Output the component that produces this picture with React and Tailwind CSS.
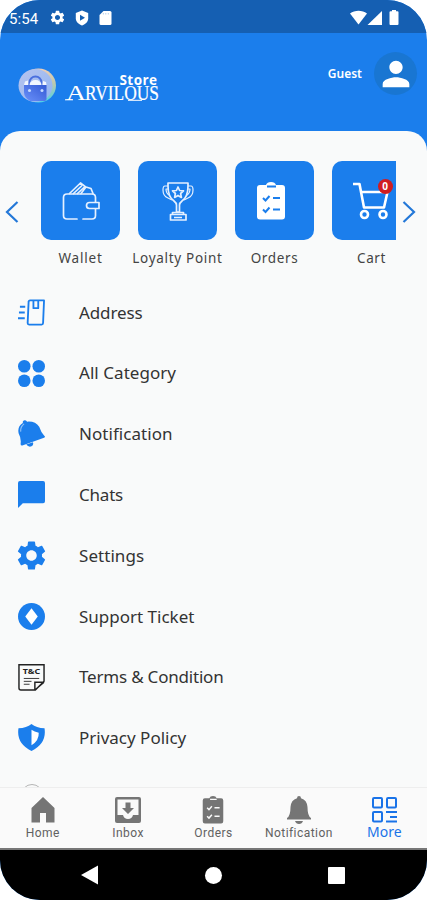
import { MdSettings, MdPerson } from 'react-icons/md';
import clsx from 'clsx';

/* ---------- status bar ---------- */

function StatusBar() {
    return (
        <div className="flex h-[33px] shrink-0 items-center bg-[#155fb2] pt-0.5 text-white">
            <span className="ml-[9px] mt-[3px] w-[30px] font-['Roboto',sans-serif] text-[15px] leading-none tracking-[0.1px]">5:54</span>
            <MdSettings className="ml-[10px] size-[17px]" />
            <svg className="ml-2 size-4" viewBox="0 0 16 16">
                <path d="M8 .5 14.2 3v5.3c0 3.4-2.7 6-6.2 7.3-3.500-1.300-6.200-3.900-6.200-7.300V3z" fill="currentColor" />
                <path d="M6 4.800v6L11 7.800z" fill="#155fb2" />
            </svg>
            <svg className="ml-2 size-4" viewBox="0 0 16 16">
                <path d="M5.500 1h6.500a1.500 1.500 0 0 1 1.500 1.500v11a1.500 1.500 0 0 1-1.500 1.500H3a1.500 1.500 0 0 1-1.500-1.500V5z" fill="currentColor" />
                <path d="M5.300 3v1.500M7.800 3v1.500M10.300 3v1.500" stroke="#b5cfea" strokeWidth="1" />
            </svg>
            <svg className="ml-auto mr-[28px] h-4 w-[49px]" viewBox="0 0 49 16" fill="currentColor">
                <path d="M0 3.600C4.800-.2 12.200-.2 17 3.600L8.500 14.500z" />
                <path d="M32 1v14H17.500z" />
                <path d="M42 0h4v1.200h1.500a1 1 0 0 1 1 1V14a1 1 0 0 1-1 1h-7a1 1 0 0 1-1-1V2.200a1 1 0 0 1 1-1H42z" />
            </svg>
        </div>
    );
}

/* ---------- header ---------- */

function BrandLogo() {
    return (
        <svg className="h-[40px] w-[146px]" viewBox="0 0 146 40">
            <defs>
                <linearGradient id="disc" x1="0" y1="0" x2="1" y2="1">
                    <stop offset="0" stopColor="#b7c4ee" />
                    <stop offset="1" stopColor="#8fb4f3" />
                </linearGradient>
                <linearGradient id="ring" x1="0" y1="0" x2="0" y2="1">
                    <stop offset="0" stopColor="#f1cdb5" />
                    <stop offset="0.450" stopColor="#b9c9ae" />
                    <stop offset="1" stopColor="#49d3e8" />
                </linearGradient>
                <linearGradient id="bag" x1="0" y1="1" x2="1" y2="0">
                    <stop offset="0" stopColor="#6b91fa" />
                    <stop offset="1" stopColor="#345bd5" />
                </linearGradient>
            </defs>
            <ellipse cx="21.500" cy="19.500" rx="17.500" ry="17" fill="url(#ring)" />
            <ellipse cx="18.500" cy="19.500" rx="17" ry="16.500" fill="url(#disc)" />
            <path d="M12.500 19v-2.500a6 6 0 0 1 12 0V19" fill="none" stroke="#4b70de" strokeWidth="1.800" />
            <path d="M12.500 19a6 5 0 0 1 12 0zM8 15.500l3-1v4.500H7zM26 15l3 1 .5 3h-4z" fill="#f1f6ff" />
            <path d="M7 19h22.500v14q0 2-2 2H13Q7 31.500 7 26z" fill="url(#bag)" />
            <circle cx="12.500" cy="24.500" r="1.500" fill="#c6dcff" />
            <circle cx="25" cy="24.500" r="1.500" fill="#c6dcff" />
            <g fill="#fff">
                <text x="102.500" y="18.500" fontFamily="Open Sans, sans-serif" fontWeight="700" fontSize="13.500" textLength="37.500">Store</text>
                <g fontFamily="Liberation Serif, serif">
                    <text x="49" y="34" fontSize="22" textLength="20" lengthAdjust="spacingAndGlyphs">A</text>
                    <text x="68" y="34" fontSize="20.500" textLength="74" lengthAdjust="spacingAndGlyphs" stroke="#fff" strokeWidth="0.200">RVILOUS</text>
                </g>
                <path d="M48 33.800h8M111 34.300h14" stroke="#fff" strokeWidth="1" />
            </g>
        </svg>
    );
}

function Header() {
    return (
        <header className="flex h-[98px] shrink-0 items-start justify-between pl-[17px] pr-[10px]">
            <div className="pt-[33px]">
                <BrandLogo />
            </div>
            <div className="flex items-center pt-[19px]">
                <span className="mr-[12px] text-[12px] font-semibold text-white">Guest</span>
                <div className="flex size-[43px] items-center justify-center rounded-full bg-[#1976d2]">
                    <MdPerson className="size-10 text-white" />
                </div>
            </div>
        </header>
    );
}

/* ---------- shortcut tiles ---------- */

function WalletIcon() {
    return (
        <svg className="size-[40px]" viewBox="0 0 40 40" fill="none" stroke="#e5f0ff" strokeWidth="1.700" strokeLinecap="round" strokeLinejoin="round">
            <path d="M16 38H6q-3.500 0-3.500-3.500V16.500Q2.500 13 6 13h25q3.500 0 3.500 3.500V21M34.500 28v6.500q0 3.500-3.500 3.500h-9" />
            <path d="M38 21.500h-9.500q-3 0-3 3t3 3H38z" />
            <path d="M8.500 12.500 19.500 2l4.500 3.500-7.500 7M12.500 12.500l8-7.500M20 12.500l5-6.500 5 1.500 2 5" />
        </svg>
    );
}

function TrophyIcon() {
    return (
        <svg className="h-[40px] w-[32px]" viewBox="0 0 32 40" fill="none" stroke="#e5f0ff" strokeWidth="1.700" strokeLinejoin="round">
            <path d="M6 2h20v3q0 11-6 15-2.500 2-2.500 4v7h-3v-7q0-2-2.500-4Q6 16 6 5z" />
            <path d="M6 5H3q-2 0-2 4 0 6 5 8 2 1 4 2M26 5h3q2 0 2 4 0 6-5 8-2 1-4 2M6.500 8H4q0 5 4 6.500M25.500 8H28q0 5-4 6.500" strokeWidth="1.200" />
            <path d="m16 6 1.600 3.500 3.900.4-2.900 2.600.8 3.900-3.400-2-3.400 2 .8-3.900-2.900-2.600 3.900-.4z" />
            <path d="M10.500 31.500h11v2H24V39H8.500v-5.500h2zM10.500 33.500h11M12 36.500h8" />
        </svg>
    );
}

function ClipboardIcon({ className, mark }) {
    return (
        <svg className={className} viewBox="0 0 30 38" fill="none">
            <path d="M4 3h6q1-3 5-3t5 3h6q3 0 3 3v28.500q0 3-3 3H4q-3 0-3-3V6q0-3 3-3z" fill="currentColor" />
            <path d="M11 4.500h9M7 16l2.500 2.500 4-4.500M7 27.500l2.500 2.500 4-4.500M17 16h7M17 27.500h7" stroke={mark} strokeWidth="2" />
        </svg>
    );
}

function CartIcon() {
    return (
        <div className="relative mr-0.5">
            <svg className="h-[40px] w-[38px]" viewBox="0 0 38 40" fill="none" stroke="#fff" strokeWidth="2.600" strokeLinejoin="round">
                <path d="M1 3h6.500L12 26.500h20L35.500 11M9 11h26.500" />
                <circle cx="12.500" cy="33.500" r="3.500" />
                <circle cx="31" cy="33.500" r="3.500" />
            </svg>
            <span className="absolute left-[26px] top-[-2px] flex size-[15px] items-center justify-center rounded-full bg-[#d01c20] text-[10px] font-bold leading-none text-white">0</span>
        </div>
    );
}

const shortcuts = [
    { label: 'Wallet', icon: <WalletIcon />, spacing: 'tracking-[0.8px]' },
    { label: 'Loyalty Point', icon: <TrophyIcon />, spacing: 'tracking-[0.7px]' },
    { label: 'Orders', icon: <ClipboardIcon className="mr-2 h-[38px] w-[30px] text-white" mark="#1b7eec" />, spacing: 'tracking-[0.65px]' },
    { label: 'Cart', icon: <CartIcon />, spacing: 'tracking-[0.6px]' },
];

function Chevron({ left }) {
    return (
        <svg className="h-[22px] w-[14px] shrink-0" viewBox="0 0 14 22" fill="none" stroke="#2478d8" strokeWidth="2.200">
            <path d={left ? 'M12.500 1 2 11l10.500 10' : 'M1.500 1 12 11 1.500 21'} />
        </svg>
    );
}

function Shortcuts() {
    return (
        <div className="flex shrink-0 items-start pl-[5px] pt-[30px]">
            <div className="pt-[40px]"><Chevron left /></div>
            <div className="ml-[13px] flex w-[364px] overflow-hidden">
                {shortcuts.map(item => (
                    <div key={item.label} className="flex w-[97px] shrink-0 flex-col items-center">
                        <div className="flex size-[79px] items-center justify-center rounded-[10px] bg-[#1b7eec]">
                            {item.icon}
                        </div>
                        <span className={clsx('mt-[7px] whitespace-nowrap text-[13.500px] leading-[22px] text-[#444]', item.spacing)}>{item.label}</span>
                    </div>
                ))}
            </div>
            <div className="ml-[6px] pt-[40px]"><Chevron /></div>
        </div>
    );
}

/* ---------- menu ---------- */

const menu = [
    {
        label: 'Address',
        spacing: 'tracking-[-0.1px]',
        icon: (
            <g fill="none" stroke="#1b7eec" strokeWidth="1.900" strokeLinejoin="round">
                <path d="M12.500 1.500H27L26 25q0 1.500-1.500 1.500h-13Q10 26.500 10 25l1-22q0-1.500 1.500-1.500zM16 2v7.500h5V2" />
                <path d="M2 8h5.500M1 14h6M0 20h7" />
            </g>
        ),
    },
    {
        label: 'All Category',
        spacing: 'tracking-[0.05px]',
        icon: (
            <g fill="#1b7eec">
                <circle cx="6.500" cy="6.500" r="6.500" />
                <circle cx="21.500" cy="6.500" r="6.500" />
                <circle cx="6.500" cy="21.500" r="6.500" />
                <circle cx="21.500" cy="21.500" r="6.500" />
            </g>
        ),
    },
    {
        label: 'Notification',
        spacing: 'tracking-[0.05px]',
        icon: (
            <g fill="#1b7eec">
                <path d="M5 1.500Q7-1 9.500 1.700 18 1 22 7q2 6 5 9 2 1.500 0 2.500L4.500 26.500q-2 .3-1.800-2Q3.500 19 .7 14-1 6.500 5 3z" />
                <path d="M8.500 25.500 15.500 23q1 3-1.500 4.300-3 1.200-5.500-1.800z" />
                <path d="M2.800 12q-.5-5 3.500-8" fill="none" stroke="#8fc0f8" strokeWidth="1.200" />
            </g>
        ),
    },
    { label: 'Chats', spacing: 'tracking-[-0.2px]', icon: <path d="M2 0h24q2 0 2 2v19q0 2-2 2H5l-5 5V2q0-2 2-2z" fill="#1b7eec" /> },
    { label: 'Settings', spacing: 'tracking-[0.05px]', component: MdSettings },
    {
        label: 'Support Ticket',
        spacing: 'tracking-[0px]',
        icon: (
            <g>
                <circle cx="14" cy="14" r="14" fill="#1b7eec" />
                <path d="m14 5.500 6.500 8.500-6.500 8.500L7.500 14z" fill="#fff" />
            </g>
        ),
    },
    {
        label: 'Terms & Condition',
        spacing: 'tracking-[-0.2px]',
        icon: (
            <g fill="none" stroke="#222" strokeWidth="1.500">
                <path d="M1 .8h26v17L18 27H3q-2 0-2-2zM17.500 27v-8H27M17.500 27l9.500-8" />
                <path d="M6 15h16M6 18h8M6 21h6" strokeWidth="0.900" />
                <text x="5" y="10.500" fontSize="7.500" fontWeight="700" stroke="none" fill="#222" textLength="18" lengthAdjust="spacingAndGlyphs">T&amp;C</text>
            </g>
        ),
    },
    {
        label: 'Privacy Policy',
        spacing: 'tracking-[0px]',
        icon: (
            <g>
                <path d="M14 0q5 4 13.500 4.500Q30 20 14 28-2 20 .5 4.500 9 4 14 0z" fill="#1b7eec" />
                <path d="M14 6q3 2.300 7.500 3Q22 17 14 22z" fill="#fff" />
            </g>
        ),
    },
];

function Menu() {
    return (
        <div className="mt-[13px] min-h-0 flex-1 overflow-hidden pl-[18px]">
            {menu.map(({ label, spacing, icon, component: Icon }) => (
                <div key={label} className="flex h-[60.8px] items-center">
                    {Icon
                        ? <Icon className="-mx-1 size-[35px] shrink-0 text-[#1b7eec]" />
                        : <svg className="size-[27px] shrink-0" viewBox="0 0 28 28">{icon}</svg>}
                    <span className={clsx('ml-[34px] text-[17px] text-[#333]', spacing)}>{label}</span>
                </div>
            ))}
            <div className="ml-[3px] mt-[16px] size-[22px] rounded-full border border-[#b5b5b5]" />
        </div>
    );
}

/* ---------- bottom bar ---------- */

const tabs = [
    {
        label: 'Home',
        icon: <path d="M14 1 25.500 12v14.500H17V17h-6v9.500H2.500V12z" fill="#757575" />,
    },
    {
        label: 'Inbox',
        icon: (
            <g>
                <rect x="1" y="1" width="26" height="26" rx="2" fill="#757575" />
                <path d="M3.500 3.500h21V19H19q-1 4-5 4t-5-4H3.500z" fill="#fafafa" />
                <path d="M11.500 6.500h5V12H20l-6 6-6-6h3.500z" fill="#757575" />
            </g>
        ),
    },
    { label: 'Orders' },
    {
        label: 'Notification',
        icon: (
            <g fill="#757575">
                <path d="M14 0q2 0 2 2.200Q22 4 22.500 11q0 9 3.500 11v1.500H2V22q3.500-2 3.500-11Q6 4 12 2.200 12 0 14 0z" />
                <path d="M10 25h8q-1 3-4 3t-4-3z" />
            </g>
        ),
    },
    {
        label: 'More',
        active: true,
        icon: (
            <g fill="none" stroke="#1a73e8" strokeWidth="2">
                <rect x="3" y="2" width="9" height="9.500" rx="1" />
                <rect x="17" y="2" width="9" height="9.500" rx="1" />
                <rect x="3" y="16" width="9" height="9.500" rx="1" />
                <path d="M16 16h11M20 21h7M16 25.500h11" />
            </g>
        ),
    },
];

function BottomBar() {
    return (
        <nav className="grid h-[63px] shrink-0 grid-cols-5 border-b-2 border-t border-b-[#777] border-t-[#eee] bg-[#fafafa]">
            {tabs.map(tab => (
                <div key={tab.label} className="flex flex-col items-center pt-2">
                    {tab.icon
                        ? <svg className="size-7 shrink-0" viewBox="0 0 28 28">{tab.icon}</svg>
                        : <ClipboardIcon className="h-7 w-[22px] text-[#757575]" mark="#fafafa" />}
                    {tab.active
                        ? <span className="text-[14px] leading-4 text-[#1a73e8]">{tab.label}</span>
                        : <span className="mt-px font-['Roboto',sans-serif] text-[12px] leading-4 tracking-[0.45px] text-[#616161]">{tab.label}</span>}
                </div>
            ))}
        </nav>
    );
}

function SystemNav() {
    return (
        <div className="flex h-[50px] shrink-0 items-center justify-between bg-black pl-[81px] pr-[82px]">
            <svg className="h-5 w-[18px]" viewBox="0 0 18 20"><path d="M0 10 17 .5v19z" fill="#fff" /></svg>
            <div className="size-[17px] rounded-full bg-white" />
            <div className="size-[17px] rounded-[1px] bg-white" />
        </div>
    );
}

export default function App() {
    return (
        <div className="h-[900px] w-[427px] bg-white">
            <div className="flex h-full flex-col overflow-hidden rounded-[40px] bg-[#1b7eec] font-['Noto_Sans',sans-serif]">
                <StatusBar />
                <Header />
                <main className="flex min-h-0 flex-1 flex-col overflow-hidden rounded-t-[20px] bg-[#f9fafa]">
                    <Shortcuts />
                    <Menu />
                </main>
                <BottomBar />
                <SystemNav />
            </div>
        </div>
    );
}
